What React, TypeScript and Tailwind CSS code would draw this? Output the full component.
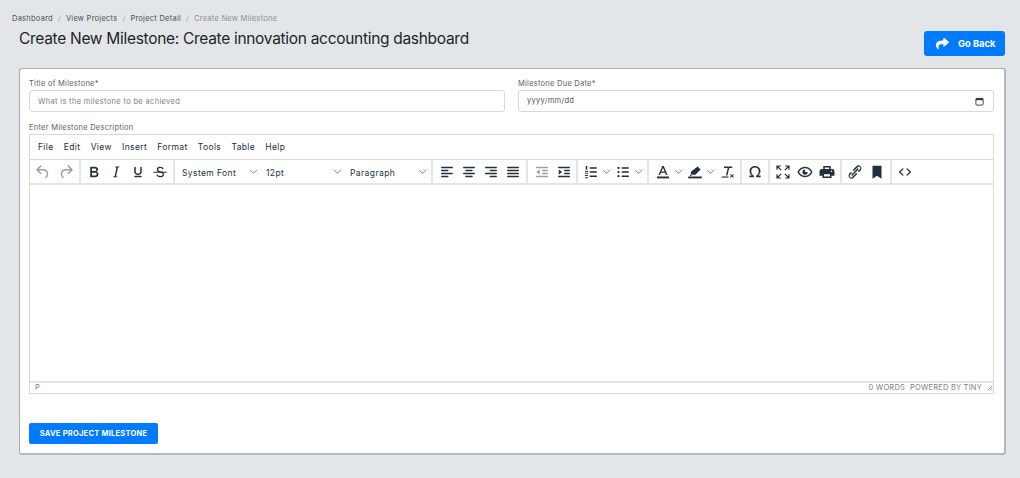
import { ReactNode } from "react";
import { FaShare } from "react-icons/fa";

const Ico = ({ children, dim }: { children: ReactNode; dim?: boolean }) => (
  <svg
    viewBox="0 0 24 24"
    className={`w-[18px] h-[18px] ${dim ? "text-[#9a9fa6]" : "text-[#222f3e]"}`}
    fill="currentColor"
    aria-hidden="true"
  >
    {children}
  </svg>
);

const Btn = ({ children }: { children: ReactNode }) => (
  <div className="w-[22px] h-[24px] flex items-center justify-center shrink-0">{children}</div>
);

const Chevron = () => (
  <svg viewBox="0 0 10 10" className="w-[9px] h-[9px] text-[#6f7680]" fill="none" stroke="currentColor" strokeWidth="1">
    <path d="M1 3l4 4 4-4" />
  </svg>
);

const Split = ({ children }: { children: ReactNode }) => (
  <div className="h-[24px] w-[32px] flex items-center shrink-0">
    <div className="w-[22px] flex justify-center">{children}</div>
    <Chevron />
  </div>
);

const Select = ({ label, width }: { label: string; width: string }) => (
  <div className={`${width} h-[24px] flex items-center justify-between pl-[4px] pr-[4px] shrink-0`}>
    <span className="pt-[3px] text-[8.5px] tracking-[0.4px] text-[#222f3e]">{label}</span>
    <Chevron />
  </div>
);

const Group = ({ children, className }: { children: ReactNode; className: string }) => (
  <div className={`flex items-center h-full border-r-2 border-[#e3e5e6] shrink-0 ${className}`}>{children}</div>
);

const lines = (rows: [number, number][]) =>
  rows.map(([x, w], i) => <rect key={i} x={x} y={5 + i * 4} width={w} height={2} rx={1} />);

const menus = ["File", "Edit", "View", "Insert", "Format", "Tools", "Table", "Help"];

export default function App() {
  return (
    <div className="w-[1020px] h-[478px] bg-[#e3e6e8] overflow-hidden font-['Inter',sans-serif]">
      <nav className="flex items-center pt-[13px] pl-[12px] h-[24px] text-[7.5px] leading-[10px] tracking-[0.25px] text-[#4a5056]">
        <span>Dashboard</span>
        <span className="mx-[5px] text-[#a0a5aa]">/</span>
        <span>View Projects</span>
        <span className="mx-[5px] text-[#a0a5aa]">/</span>
        <span>Project Detail</span>
        <span className="mx-[5px] text-[#a0a5aa]">/</span>
        <span className="text-[#8b9096]">Create New Milestone</span>
      </nav>

      <div className="flex justify-between pl-[19px] pr-[15px] h-[44px]">
        <h1 className="text-[15.5px] leading-[22px] pt-[4px] tracking-[-0.3px] text-[#212529] font-normal">
          Create New Milestone: Create innovation accounting dashboard
        </h1>
        <button
          type="button"
          className="mt-[7px] w-[81px] h-[25px] bg-[#007bff] rounded-[3px] text-white text-[9.3px] font-bold flex items-center pl-[12px] gap-[9px]"
        >
          <FaShare className="w-[13px] h-[13px]" />
          Go Back
        </button>
      </div>

      <main className="mx-[19px] mr-[14px] h-[387px] bg-white border border-[#a9adb0] border-r-2 border-b-2 border-r-[#b5b8ba] border-b-[#b5b8ba] rounded-[3px] pl-[9px] pr-[10px] pt-[10px]">
        <div className="flex gap-[13px]">
          <label className="flex-1 block">
            <span className="block text-[7.5px] leading-[10px] tracking-[0.25px] text-[#5a6066]">Title of Milestone*</span>
            <input
              type="text"
              placeholder="What is the milestone to be achieved"
              className="block mt-[1px] w-full h-[22px] border border-[#d7dadd] rounded-[3px] px-[8px] text-[7.5px] tracking-[0.33px] outline-none placeholder:text-[#7a8086]"
            />
          </label>
          <label className="flex-1 block">
            <span className="block text-[7.5px] leading-[10px] tracking-[0.25px] text-[#5a6066]">Milestone Due Date*</span>
            <div className="mt-[1px] w-full h-[22px] border border-[#d7dadd] rounded-[3px] pl-[8px] pr-[9px] flex items-center justify-between text-[7.5px] tracking-[0.3px] text-[#4a5056]">
              yyyy/mm/dd
              <svg viewBox="0 0 10 10" className="w-[9px] h-[9px] text-[#333]" fill="none" stroke="currentColor">
                <rect x="1" y="1.5" width="8" height="7.5" rx="1" strokeWidth="1" />
                <path d="M1 2.5h8" strokeWidth="2" />
              </svg>
            </div>
          </label>
        </div>

        <div className="mt-[11px] text-[7.5px] leading-[10px] tracking-[0.25px] text-[#5a6066]">Enter Milestone Description</div>

        <div className="mt-[1px] h-[260px] border border-[#d7dadd] flex flex-col">
          <div className="h-[25px] flex items-center pl-[8px] pt-[1px] gap-[10.3px] border-b border-[#d7dadd] text-[8.5px] tracking-[0.35px] text-[#222f3e] shrink-0">
            {menus.map((m) => (
              <span key={m}>{m}</span>
            ))}
          </div>

          <div className="h-[25px] flex items-center border-b-2 border-[#e3e5e6] shrink-0">
            <Group className="w-[51px] pl-[2px] gap-[1px]">
              <Btn>
                <Ico dim>
                  <path d="M6.4 8H12c3.7 0 6.2 2 6.8 5.1.6 2.7-.4 5.6-2.3 6.8a1 1 0 0 1-1-1.8c1.1-.6 1.8-2.7 1.4-4.6-.5-2.1-2.1-3.5-4.9-3.5H6.4l3.3 3.3a1 1 0 1 1-1.4 1.4l-5-5a1 1 0 0 1 0-1.4l5-5a1 1 0 0 1 1.4 1.4L6.4 8Z" />
                </Ico>
              </Btn>
              <Btn>
                <Ico dim>
                  <path d="M17.6 10H12c-2.8 0-4.4 1.4-4.9 3.5-.4 2 .3 4 1.4 4.6a1 1 0 1 1-1 1.8c-2-1.2-2.9-4.1-2.3-6.8.6-3 3-5.1 6.8-5.1h5.6l-3.3-3.3a1 1 0 1 1 1.4-1.4l5 5a1 1 0 0 1 0 1.4l-5 5a1 1 0 0 1-1.4-1.4l3.3-3.3Z" />
                </Ico>
              </Btn>
            </Group>
            <Group className="w-[94px] pl-[2px]">
              <Btn>
                <Ico>
                  <path d="M7.8 19c-.3 0-.5 0-.6-.2l-.2-.5V5.7c0-.2 0-.4.2-.5l.6-.2h5c1.5 0 2.7.3 3.5 1 .7.6 1.1 1.4 1.1 2.5a3 3 0 0 1-.6 1.9c-.4.6-1 1-1.6 1.2.4.1.9.3 1.3.6s.8.7 1 1.2c.4.4.5 1 .5 1.6 0 1.3-.4 2.3-1.3 3-.8.7-2.1 1-3.8 1H7.8Zm5-8.3c.6 0 1.2-.1 1.6-.5.4-.3.6-.7.6-1.3 0-1.1-.8-1.7-2.3-1.7H9.3v3.5h3.4Zm.5 6c.7 0 1.3-.1 1.7-.4.4-.4.6-.9.6-1.5s-.2-1-.7-1.4c-.4-.3-1-.4-2-.4H9.4v3.8h4Z" />
                </Ico>
              </Btn>
              <Btn>
                <Ico>
                  <path d="m16.7 4.7-.1.9h-.3c-.6 0-1 0-1.4.3-.3.3-.4.6-.5 1.1l-2.1 9.8v.6c0 .5.4.8 1.4.8h.2l-.2.8H8l.2-.8h.2c1.1 0 1.8-.5 2-1.5l2-9.8.1-.5c0-.6-.4-.8-1.4-.8h-.3l.2-.9h5.8Z" />
                </Ico>
              </Btn>
              <Btn>
                <Ico>
                  <path d="M16 5c.6 0 1 .4 1 1v5.5a4 4 0 0 1-.4 1.8l-1 1.4a5.3 5.3 0 0 1-5.5 1 5 5 0 0 1-1.6-1c-.5-.4-.8-.9-1.1-1.4a4 4 0 0 1-.4-1.8V6c0-.6.4-1 1-1s1 .4 1 1v5.5c0 .3 0 .6.2 1l.6.7a3.3 3.3 0 0 0 2.2.8 3.4 3.4 0 0 0 2.2-.8c.3-.2.4-.5.6-.8l.2-.9V6c0-.6.4-1 1-1ZM8 17h8c.6 0 1 .4 1 1s-.4 1-1 1H8a1 1 0 0 1 0-2Z" />
                </Ico>
              </Btn>
              <Btn>
                <Ico>
                  <path d="M15.6 8.5c-.5-.7-1-1.1-1.3-1.3-.6-.4-1.3-.6-2-.6-2.7 0-2.8 1.7-2.8 2.1 0 1.6 1.8 2 3.2 2.3 4.4.9 4.6 2.8 4.6 3.9 0 1.4-.7 4.1-5 4.1A6.2 6.2 0 0 1 7 16.4l1.5-1.1c.4.6 1.6 2 3.7 2 1.6 0 2.5-.4 3-1 .3-.4.3-.9.3-1.2 0-.8-.3-1.8-3-2.4-2.5-.5-4.8-1-4.8-3.8 0-1.4.8-3.8 4.6-3.8 1.4 0 2.3.3 3 .7.5.4 1 .8 1.6 1.6l-1.3 1.1Z" />
                  <rect x="3" y="11.5" width="18" height="1.6" rx=".8" />
                </Ico>
              </Btn>
            </Group>
            <Group className="w-[258px] pl-[3px]">
              <Select label="System Font" width="w-[84px]" />
              <Select label="12pt" width="w-[84px]" />
              <Select label="Paragraph" width="w-[85px]" />
            </Group>
            <Group className="w-[95px] pl-[3px]">
              <Btn><Ico>{lines([[4, 16], [4, 10], [4, 16], [4, 10]])}</Ico></Btn>
              <Btn><Ico>{lines([[4, 16], [7, 10], [4, 16], [7, 10]])}</Ico></Btn>
              <Btn><Ico>{lines([[4, 16], [10, 10], [4, 16], [10, 10]])}</Ico></Btn>
              <Btn><Ico>{lines([[4, 16], [4, 16], [4, 16], [4, 16]])}</Ico></Btn>
            </Group>
            <Group className="w-[50px] pl-[3px]">
              <Btn>
                <Ico dim>
                  {lines([[4, 16], [12, 8], [12, 8], [4, 16]])}
                  <path d="M9 8.5v7L4.5 12z" />
                </Ico>
              </Btn>
              <Btn>
                <Ico>
                  {lines([[4, 16], [12, 8], [12, 8], [4, 16]])}
                  <path d="M5 8.5v7L9.5 12z" />
                </Ico>
              </Btn>
            </Group>
            <Group className="w-[71px] pl-[2px]">
              <Split>
                <Ico>
                  <rect x="10" y="5.5" width="10" height="2" rx="1" />
                  <rect x="10" y="11" width="10" height="2" rx="1" />
                  <rect x="10" y="16.5" width="10" height="2" rx="1" />
                  <rect x="5" y="4" width="2" height="5" />
                  <rect x="4" y="10.5" width="4" height="1.3" />
                  <rect x="4" y="13" width="4" height="1.3" />
                  <rect x="4" y="16" width="4" height="1.3" />
                  <rect x="4" y="19" width="4" height="1.3" />
                </Ico>
              </Split>
              <Split>
                <Ico>
                  <rect x="10" y="5.5" width="10" height="2" rx="1" />
                  <rect x="10" y="11" width="10" height="2" rx="1" />
                  <rect x="10" y="16.5" width="10" height="2" rx="1" />
                  <circle cx="6" cy="6.5" r="1.5" />
                  <circle cx="6" cy="12" r="1.5" />
                  <circle cx="6" cy="17.5" r="1.5" />
                </Ico>
              </Split>
            </Group>
            <Group className="w-[93px] pl-[3px]">
              <Split>
                <Ico>
                  <path d="M11 4h2l5 12h-2l-1.2-3H9.2L8 16H6L11 4Zm-1.1 7.2h4.2L12 6.3 9.9 11.2Z" />
                  <rect x="4" y="18" width="16" height="2.5" />
                </Ico>
              </Split>
              <Split>
                <Ico>
                  <path d="M15.5 4.5l4 4-7 7H7.5l-1-1v-3l9-7Z" />
                  <path d="M6 15l2 2-3 .5z" />
                  <rect x="3" y="18" width="18" height="2.5" />
                </Ico>
              </Split>
              <Btn>
                <Ico>
                  <path d="M8 4.5h11v2h-4l-2.5 10h-2L13 6.5H8z" />
                  <rect x="5" y="18" width="9" height="1.5" />
                  <path d="M16 15.5l.9-.9 1.6 1.6 1.6-1.6.9.9-1.6 1.6 1.6 1.6-.9.9-1.6-1.6-1.6 1.6-.9-.9 1.6-1.6z" />
                </Ico>
              </Btn>
            </Group>
            <Group className="w-[28px] pl-[2px]">
              <Btn>
                <Ico>
                  <path d="M12 4c4.2 0 7.3 2.9 7.3 6.8 0 2.6-1.2 4.6-3.2 6h3.4V19h-6v-2c2-1 3.5-3 3.5-5.9 0-2.9-2-5-5-5s-5 2.1-5 5c0 2.9 1.5 4.9 3.5 5.9v2h-6v-2.200h3.400c-2-1.400-3.200-3.400-3.200-6C4.700 6.900 7.800 4 12 4Z" />
                </Ico>
              </Btn>
            </Group>
            <Group className="w-[72px] pl-[2px]">
              <Btn>
                <Ico>
                  <path
                    d="M4 9V4h5M4 4l5.500 5.500M20 9V4h-5M20 4l-5.500 5.500M4 15v5h5M4 20l5.500-5.500M20 15v5h-5M20 20l-5.500-5.500"
                    fill="none"
                    stroke="currentColor"
                    strokeWidth="1.6"
                  />
                </Ico>
              </Btn>
              <Btn>
                <Ico>
                  <path fillRule="evenodd" d="M12 5c5 0 9 4 10 7-1 3-5 7-10 7S3 15 2 12c1-3 5-7 10-7Zm0 2c-3.800 0-7 2.900-7.900 5 .9 2.100 4.100 5 7.900 5s7-2.900 7.900-5C19 9.900 15.800 7 12 7Z" />
                  <path d="M12 8.500a3.500 3.500 0 1 0 3.500 3.500H12z" />
                </Ico>
              </Btn>
              <Btn>
                <Ico>
                  <path fillRule="evenodd" d="M7 4h10v4h2a3 3 0 0 1 3 3v6h-4v3H6v-3H2v-6a3 3 0 0 1 3-3h2Zm2 2v2h6V6Zm-1 9v3h8v-3Zm10-5a1 1 0 1 0 0 2 1 1 0 0 0 0-2Z" />
                </Ico>
              </Btn>
            </Group>
            <Group className="w-[50px] pl-[2px]">
              <Btn>
                <Ico>
                  <path d="M6.200 12.300a1 1 0 0 1 1.400 1.400l-2 2a2 2 0 1 0 2.800 2.800l4.800-4.800a1 1 0 0 1 1.400 1.400l-4.800 4.800a4 4 0 0 1-5.600-5.600l2-2Zm11.600-.6a1 1 0 0 1-1.400-1.400l2-2a2 2 0 1 0-2.800-2.800l-4.800 4.800a1 1 0 1 1-1.400-1.400l4.800-4.800a4 4 0 0 1 5.600 5.600l-2 2Z" />
                  <path d="M15.200 7.400a1 1 0 0 1 1.400 1.400l-7.800 7.800a1 1 0 0 1-1.400-1.400z" />
                </Ico>
              </Btn>
              <Btn>
                <Ico>
                  <path d="M6 3.500h12v17.500l-6-4-6 4z" />
                </Ico>
              </Btn>
            </Group>
            <div className="pl-[2px]">
              <Btn>
                <Ico>
                  <path d="M9.800 15.700c.3.3.3.800 0 1-.3.400-.9.400-1.200 0l-4.400-4.100a.8.800 0 0 1 0-1.200l4.400-4.200c.3-.3.900-.3 1.200 0 .3.300.3.800 0 1.100L6 12l3.800 3.700Zm4.400 0L18 12l-3.800-3.700a.8.800 0 0 1 0-1.100c.3-.3.900-.3 1.200 0l4.400 4.200c.3.300.3.900 0 1.200l-4.400 4.100c-.3.400-.9.400-1.200 0a.8.800 0 0 1 0-1Z" />
                </Ico>
              </Btn>
            </div>
          </div>

          <div className="flex-1" />

          <div className="h-[12px] border-t-2 border-[#e3e5e6] flex items-center justify-between pl-[5px] text-[7.5px] tracking-[0.2px] text-[#7c8288] shrink-0">
            <span>P</span>
            <div className="flex items-center gap-[5px]">
              <span>0 WORDS</span>
              <span>POWERED BY TINY</span>
              <svg viewBox="0 0 10 10" className="w-[6px] h-[6px] text-[#555]" fill="none" stroke="currentColor" strokeWidth="1">
                <path d="M1 9l8-8M5 9l4-4" />
              </svg>
            </div>
          </div>
        </div>

        <button
          type="button"
          className="mt-[29px] w-[129px] h-[21px] bg-[#007bff] rounded-[2px] text-white text-[7.5px] font-bold tracking-[0.25px] flex items-center justify-center"
        >
          SAVE PROJECT MILESTONE
        </button>
      </main>
    </div>
  );
}
